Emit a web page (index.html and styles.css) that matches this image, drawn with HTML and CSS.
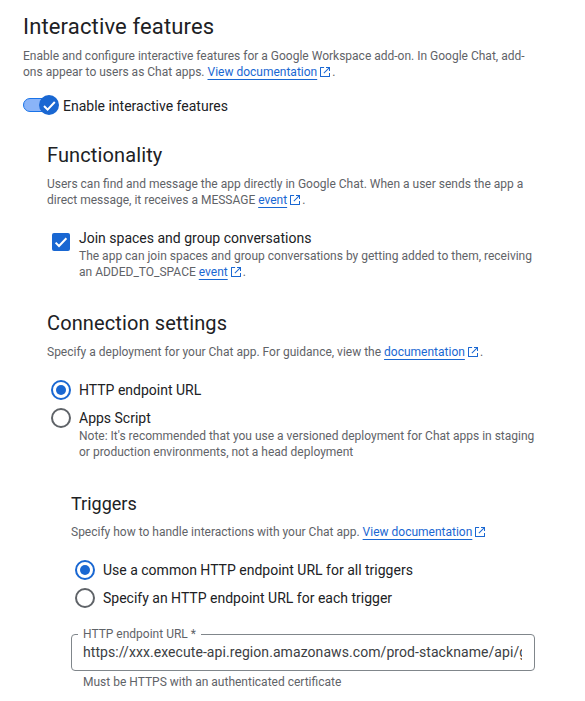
FILE: index.html
```html
<!DOCTYPE html>
<html lang="en">
<head>
<meta charset="utf-8">
<title>Interactive features</title>
<link rel="stylesheet" href="styles.css">
</head>
<body>
<svg class="defs" width="0" height="0" aria-hidden="true">
  <symbol id="ext" viewBox="1 1 10 10">
    <path d="M1.5 1h3.6v1H2v8h8V6.9h1v3.6a.5.5 0 0 1-.5.5h-9a.5.5 0 0 1-.5-.5v-9a.5.5 0 0 1 .5-.5zM7 1h4v4h-1V2.7L5.2 7.5l-.7-.7L9.3 2H7z" fill="currentColor"/>
  </symbol>
</svg>
<main class="page">
  <h1 class="title">Interactive features</h1>
  <p class="desc">Enable and configure interactive features for a Google Workspace add-on. In Google Chat, add-ons appear to users as Chat apps. <a class="link" href="#">View documentation</a><svg class="ext"><use href="#ext"/></svg>.</p>
  <div class="toggle-row">
    <span class="toggle">
      <span class="track"></span>
      <span class="thumb"><svg viewBox="0 0 20 20" width="20" height="20"><path d="M5 11l3.6 3.6 7.2-7.6" fill="none" stroke="#fff" stroke-width="2"/></svg></span>
    </span>
    <span class="toggle-label">Enable interactive features</span>
  </div>

  <section class="indent">
    <h2 class="subtitle func">Functionality</h2>
    <p class="desc">Users can find and message the app directly in Google Chat. When a user sends the app a direct message, it receives a MESSAGE <a class="link" href="#">event</a><svg class="ext"><use href="#ext"/></svg>.</p>
    <div class="check-row">
      <span class="checkbox"><svg viewBox="0 0 18 18" width="18" height="18"><path d="M3.6 9.6l3.4 3.4 7.4-7.8" fill="none" stroke="#fff" stroke-width="2"/></svg></span>
      <div class="option-body">
        <div class="option-label">Join spaces and group conversations</div>
        <p class="desc">The app can join spaces and group conversations by getting added to them, receiving an ADDED_TO_SPACE <a class="link" href="#">event</a><svg class="ext"><use href="#ext"/></svg>.</p>
      </div>
    </div>

    <h2 class="subtitle conn">Connection settings</h2>
    <p class="desc">Specify a deployment for your Chat app. For guidance, view the <a class="link" href="#">documentation</a><svg class="ext"><use href="#ext"/></svg>.</p>
    <div class="radio-group first">
      <div class="radio-row"><span class="radio on"></span><div class="option-label">HTTP endpoint URL</div></div>
      <div class="radio-row"><span class="radio"></span>
        <div class="option-body">
          <div class="option-label">Apps Script</div>
          <p class="desc">Note: It's recommended that you use a versioned deployment for Chat apps in staging or production environments, not a head deployment</p>
        </div>
      </div>
    </div>

    <section class="indent triggers">
      <h3 class="subsub">Triggers</h3>
      <p class="desc">Specify how to handle interactions with your Chat app. <a class="link" href="#">View documentation</a><svg class="ext"><use href="#ext"/></svg></p>
      <div class="radio-group second">
        <div class="radio-row"><span class="radio on"></span><div class="option-label">Use a common HTTP endpoint URL for all triggers</div></div>
        <div class="radio-row"><span class="radio"></span><div class="option-label">Specify an HTTP endpoint URL for each trigger</div></div>
      </div>
      <fieldset class="field">
        <legend class="field-label">HTTP endpoint URL *</legend>
        <input class="field-input" type="text" readonly value="https://xxx.execute-api.region.amazonaws.com/prod-stackname/api/gchat">
      </fieldset>
      <p class="desc hint">Must be HTTPS with an authenticated certificate</p>
    </section>
  </section>
</main>
</body>
</html>
```
FILE: styles.css
```css
* { box-sizing: border-box; }
html, body { margin: 0; padding: 0; background: #fff; }
body { font-family: Roboto, "Liberation Sans", sans-serif; color: #202124; overflow: hidden; height: 701px; }
.defs { position: absolute; }
.page { width: 512px; margin-left: 23px; padding-top: 13px; }
.title { margin: 0; font-size: 22px; line-height: 28px; font-weight: 400; letter-spacing: .15px; }
.desc { margin: 0; font-size: 12px; line-height: 16px; color: #5f6368; }
.title + .desc { margin-top: 7px; }
.link { color: #1967d2; text-decoration: underline 1px; text-underline-offset: 3px; }
.ext { width: 10px; height: 10px; margin: 0 2px 0 3px; color: #1967d2; vertical-align: -1px; }
.toggle-row { display: flex; align-items: center; margin-top: 14px; height: 24px; }
.toggle { position: relative; display: block; width: 36px; height: 24px; flex: none; }
.track { position: absolute; left: 0; top: 4px; width: 32px; height: 14px; border-radius: 7px; background: #8ab4f8; border: 1px solid #1a73e8; }
.thumb { position: absolute; left: 16px; top: 1px; width: 20px; height: 20px; border-radius: 50%; background: #1967d2; }
.thumb svg { display: block; }
.toggle-label { margin-left: 4px; font-size: 14px; line-height: 20px; }
.indent { padding-left: 24px; }
.subtitle { margin: 0; font-size: 20px; line-height: 28px; font-weight: 400; letter-spacing: .12px; }
.func { margin-top: 23px; }
.func + .desc { margin-top: 7px; }
.check-row { display: flex; margin-top: 20px; }
.checkbox { flex: none; width: 18px; height: 18px; margin: 5px 9px 0 5px; border-radius: 2px; background: #1967d2; }
.checkbox svg { display: block; }
.option-body { min-width: 0; }
.option-label { font-size: 14px; line-height: 20px; }
.conn { margin-top: 29px; }
.conn + .desc { margin-top: 7px; }
.radio-group { display: flex; flex-direction: column; }
.first { margin-top: 20px; gap: 8px; }
.radio-row { display: flex; align-items: flex-start; }
.radio { flex: none; width: 20px; height: 20px; margin: 0 8px 0 4px; border-radius: 50%; border: 2px solid #5f6368; position: relative; }
.radio.on { border-color: #1967d2; }
.radio.on::after { content: ""; position: absolute; left: 3px; top: 3px; width: 10px; height: 10px; border-radius: 50%; background: #1967d2; }
.triggers { margin-top: 32px; }
.subsub { margin: 0; font-size: 18px; line-height: 24px; font-weight: 400; }
.subsub + .desc { margin-top: 8px; }
.second { margin-top: 20px; gap: 8px; }
.field { margin: 19px 0 0; padding: 0 12px 0 11px; height: 44px; border: 1px solid #80868b; border-radius: 4px; min-width: 0; }
.field-label { margin-left: -5px; padding: 0 5px; font-size: 12px; line-height: 14px; color: #5f6368; }
.field-input { display: block; width: 100%; border: 0; padding: 0; margin: 1px 0 0; outline: 0; background: transparent; font: 14px/20px Roboto, "Liberation Sans", sans-serif; letter-spacing: .07px; color: #3c4043; }
.hint { margin: 3px 0 0 12px; }
```
